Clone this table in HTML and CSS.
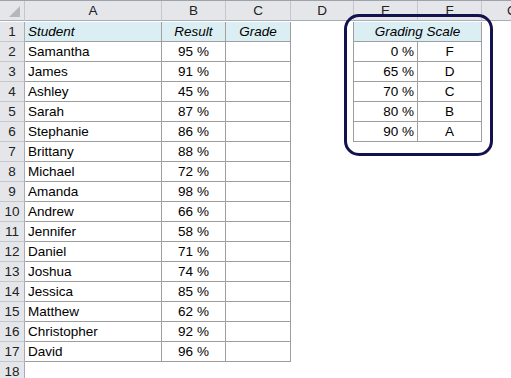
FILE: index.html
```html
<!DOCTYPE html>
<html>
<head>
<meta charset="utf-8">
<link rel="stylesheet" href="styles.css">
</head>
<body>
<div class="sheet">
  <div class="hd corner"><span class="tri"></span></div>
  <div class="hd">A</div><div class="hd">B</div><div class="hd">C</div><div class="hd">D</div><div class="hd">E</div><div class="hd">F</div><div class="hd g">G</div>

  <div class="rh">1</div>
  <div class="c t hl it">Student</div><div class="c t hl it ctr">Result</div><div class="c t hl it ctr">Grade</div>
  <div class="c dr"></div><div class="c gs hl it ctr">Grading Scale</div><div class="c"></div>

  <div class="rh">2</div>
  <div class="c t">Samantha</div><div class="c t ctr">95 %</div><div class="c t"></div>
  <div class="c dr"></div><div class="c t rt">0 %</div><div class="c t ctr">F</div><div class="c"></div>

  <div class="rh">3</div>
  <div class="c t">James</div><div class="c t ctr">91 %</div><div class="c t"></div>
  <div class="c dr"></div><div class="c t rt">65 %</div><div class="c t ctr">D</div><div class="c"></div>

  <div class="rh">4</div>
  <div class="c t">Ashley</div><div class="c t ctr">45 %</div><div class="c t"></div>
  <div class="c dr"></div><div class="c t rt">70 %</div><div class="c t ctr">C</div><div class="c"></div>

  <div class="rh">5</div>
  <div class="c t">Sarah</div><div class="c t ctr">87 %</div><div class="c t"></div>
  <div class="c dr"></div><div class="c t rt">80 %</div><div class="c t ctr">B</div><div class="c"></div>

  <div class="rh">6</div>
  <div class="c t">Stephanie</div><div class="c t ctr">86 %</div><div class="c t"></div>
  <div class="c dr"></div><div class="c t rt">90 %</div><div class="c t ctr">A</div><div class="c"></div>

  <div class="rh">7</div>
  <div class="c t">Brittany</div><div class="c t ctr">88 %</div><div class="c t"></div><div class="c rest"></div>
  <div class="rh">8</div>
  <div class="c t">Michael</div><div class="c t ctr">72 %</div><div class="c t"></div><div class="c rest"></div>
  <div class="rh">9</div>
  <div class="c t">Amanda</div><div class="c t ctr">98 %</div><div class="c t"></div><div class="c rest"></div>
  <div class="rh">10</div>
  <div class="c t">Andrew</div><div class="c t ctr">66 %</div><div class="c t"></div><div class="c rest"></div>
  <div class="rh">11</div>
  <div class="c t">Jennifer</div><div class="c t ctr">58 %</div><div class="c t"></div><div class="c rest"></div>
  <div class="rh">12</div>
  <div class="c t">Daniel</div><div class="c t ctr">71 %</div><div class="c t"></div><div class="c rest"></div>
  <div class="rh">13</div>
  <div class="c t">Joshua</div><div class="c t ctr">74 %</div><div class="c t"></div><div class="c rest"></div>
  <div class="rh">14</div>
  <div class="c t">Jessica</div><div class="c t ctr">85 %</div><div class="c t"></div><div class="c rest"></div>
  <div class="rh">15</div>
  <div class="c t">Matthew</div><div class="c t ctr">62 %</div><div class="c t"></div><div class="c rest"></div>
  <div class="rh">16</div>
  <div class="c t">Christopher</div><div class="c t ctr">92 %</div><div class="c t"></div><div class="c rest"></div>
  <div class="rh">17</div>
  <div class="c t">David</div><div class="c t ctr">96 %</div><div class="c t"></div><div class="c rest"></div>
  <div class="rh">18</div>
  <div class="c full"></div>

  <div class="ring"></div>
</div>
</body>
</html>
```

FILE: styles.css
```css
html, body {
  margin: 0;
  padding: 0;
  background: #ffffff;
}
.sheet {
  position: relative;
  display: grid;
  grid-template-columns: 25px 137px 64px 65px 63px 64px 64px 1fr;
  grid-auto-rows: 20px;
  grid-template-rows: 21px;
  width: 511px;
  height: 378px;
  overflow: hidden;
  font-family: "Liberation Sans", Arial, sans-serif;
  font-size: 13.5px;
  color: #000;
  border-top: 1px solid #9da3aa;
  box-sizing: border-box;
}
.hd {
  box-sizing: border-box;
  background: #e4e6ea;
  border-right: 1px solid #c3c7cc;
  border-bottom: 1px solid #a9adb3;
  display: flex;
  align-items: center;
  justify-content: center;
  color: #222;
  height: 20px;
}
.corner {
  position: relative;
}
.tri {
  position: absolute;
  right: 4px;
  bottom: 3px;
  width: 0;
  height: 0;
  border-left: 11px solid transparent;
  border-bottom: 11px solid #b4b8bd;
}
.g {
  justify-content: flex-start;
  padding-left: 25px;
  border-right: none;
}
.rh {
  box-sizing: border-box;
  background: #e4e6ea;
  border-right: 1px solid #a9adb3;
  border-bottom: 1px solid #c3c7cc;
  display: flex;
  align-items: center;
  justify-content: center;
  color: #222;
  grid-column: 1;
}
.c {
  box-sizing: border-box;
  display: flex;
  align-items: center;
  padding: 0 3px;
  white-space: nowrap;
  overflow: hidden;
}
.t {
  border-right: 1px solid #9e9e9e;
  border-bottom: 1px solid #9e9e9e;
}
.dr {
  border-right: 1px solid #9e9e9e;
}
.gs {
  grid-column: span 2;
  border-right: 1px solid #9e9e9e;
  border-bottom: 1px solid #9e9e9e;
}
.hl {
  background: #daeef3;
}
.it {
  font-style: italic;
}
.ctr {
  justify-content: center;
}
.rt {
  justify-content: flex-end;
}
.rest {
  grid-column: 5 / 9;
}
.full {
  grid-column: 2 / 9;
}
.ring {
  position: absolute;
  left: 344px;
  top: 13px;
  width: 149px;
  height: 142px;
  box-sizing: border-box;
  border: 3px solid #12124e;
  border-radius: 15px;
  pointer-events: none;
}
```
